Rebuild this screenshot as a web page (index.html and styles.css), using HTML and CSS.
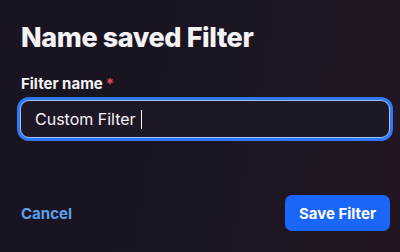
FILE: index.html
```html
<!DOCTYPE html>
<html lang="en">
<head>
    <meta charset="UTF-8">
    <title>Name saved Filter</title>
    <link rel="stylesheet" href="styles.css">
</head>
<body>
    <div class="dialog">
        <h1 class="title">Name saved Filter</h1>
        <div class="field">
            <label class="label" for="filter-name">Filter name<span class="required">*</span></label>
            <div class="input-wrap">
                <span class="input-text">Custom Filter</span><span class="caret"></span>
            </div>
        </div>
        <div class="actions">
            <button class="cancel">Cancel</button>
            <button class="save">Save Filter</button>
        </div>
    </div>
</body>
</html>
```

FILE: styles.css
```css
html, body{
    margin: 0;
    padding: 0;
    width: 400px;
    height: 252px;
    overflow: hidden;
}
body{
    background: linear-gradient(100deg, #19141f 0%, #1b1522 55%, #221622 100%);
    font-family: Inter, "Noto Sans", sans-serif;
    color: #f3f2f5;
}
.dialog{
    display: flex;
    flex-direction: column;
    padding: 23px 10px 0 21px;
    height: 100%;
    box-sizing: border-box;
}
.title{
    margin: 0;
    font-size: 27px;
    font-weight: 800;
    line-height: 30px;
    letter-spacing: -0.4px;
}
.field{
    margin-top: 22px;
    display: flex;
    flex-direction: column;
}
.label{
    font-size: 15px;
    font-weight: 700;
    line-height: 18px;
}
.required{
    color: #e0485a;
    margin-left: 3px;
}
.input-wrap{
    margin-top: 7px;
    margin-left: -1px;
    height: 38px;
    box-sizing: border-box;
    border: 1px solid #9cc3ff;
    border-radius: 9px;
    box-shadow: 0 0 0 3px #3079f6;
    background: #1e1826;
    display: flex;
    align-items: center;
    padding-left: 14px;
}
.input-text{
    font-size: 16px;
    color: #f4f3f6;
}
.caret{
    width: 1px;
    height: 19px;
    background: #f4f3f6;
    margin-left: 5px;
}
.actions{
    margin-top: 57px;
    display: flex;
    justify-content: space-between;
    align-items: center;
}
button{
    font-family: Inter, "Noto Sans", sans-serif;
    border: none;
    cursor: pointer;
}
.cancel{
    background: none;
    padding: 0;
    color: #5aa2ec;
    font-size: 15px;
    font-weight: 700;
}
.save{
    background: #1a66f8;
    color: #fff;
    font-size: 15px;
    font-weight: 700;
    height: 36px;
    width: 105px;
    border-radius: 7px;
}
```
